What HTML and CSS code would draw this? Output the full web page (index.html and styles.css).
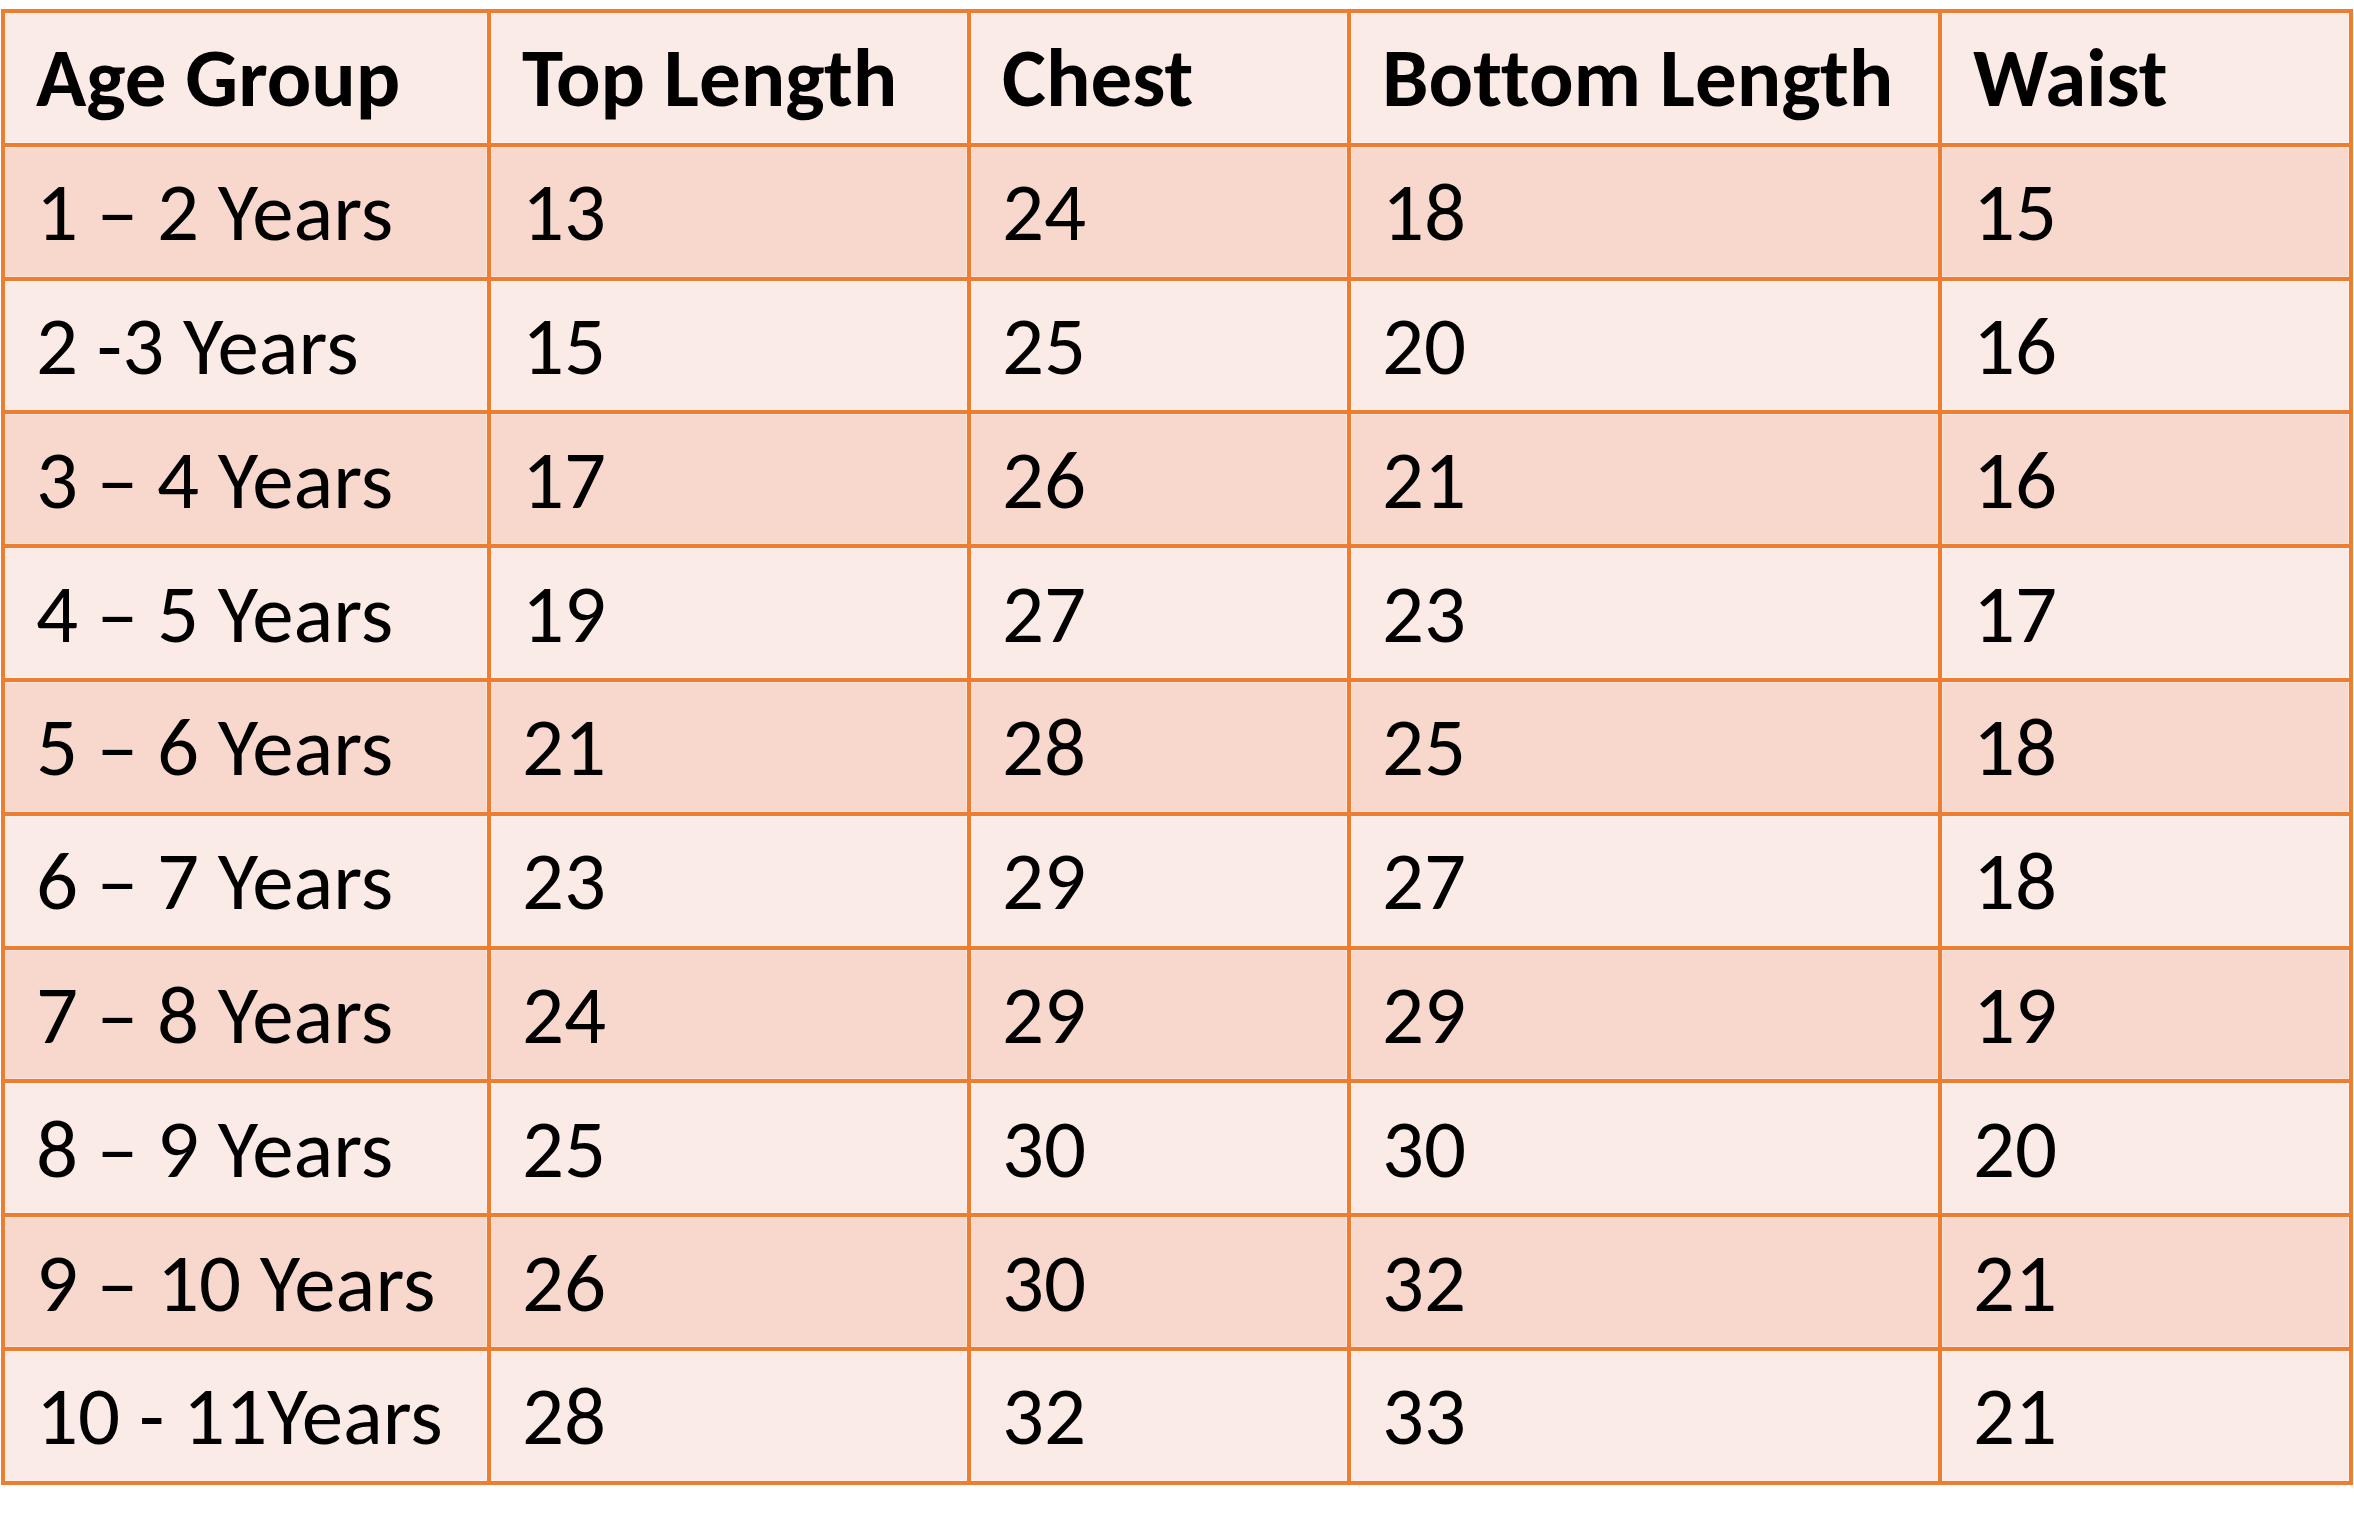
FILE: index.html
```html
<!DOCTYPE html>
<html lang="en">
<head>
<meta charset="utf-8">
<title>Size Chart</title>
<link rel="stylesheet" href="styles.css">
</head>
<body>
<table class="chart">
  <colgroup>
    <col class="c1"><col class="c2"><col class="c3"><col class="c4"><col class="c5">
  </colgroup>
  <thead>
    <tr class="head"><th>Age Group</th><th>Top Length</th><th>Chest</th><th>Bottom Length</th><th>Waist</th></tr>
  </thead>
  <tbody>
    <tr class="dark"><td>1 – 2 Years</td><td>13</td><td>24</td><td>18</td><td>15</td></tr>
    <tr class="light"><td>2 -3 Years</td><td>15</td><td>25</td><td>20</td><td>16</td></tr>
    <tr class="dark"><td>3 – 4 Years</td><td>17</td><td>26</td><td>21</td><td>16</td></tr>
    <tr class="light"><td>4 – 5 Years</td><td>19</td><td>27</td><td>23</td><td>17</td></tr>
    <tr class="dark"><td>5 – 6 Years</td><td>21</td><td>28</td><td>25</td><td>18</td></tr>
    <tr class="light"><td>6 – 7 Years</td><td>23</td><td>29</td><td>27</td><td>18</td></tr>
    <tr class="dark"><td>7 – 8 Years</td><td>24</td><td>29</td><td>29</td><td>19</td></tr>
    <tr class="light"><td>8 – 9 Years</td><td>25</td><td>30</td><td>30</td><td>20</td></tr>
    <tr class="dark"><td>9 – 10 Years</td><td>26</td><td>30</td><td>32</td><td>21</td></tr>
    <tr class="light"><td>10 - 11Years</td><td>28</td><td>32</td><td>33</td><td>21</td></tr>
  </tbody>
</table>
</body>
</html>
```

FILE: styles.css
```css
html, body {
  margin: 0;
  padding: 0;
  background: #ffffff;
}
body {
  padding: 9px 0 0 1px;
}
.chart {
  border-collapse: collapse;
  table-layout: fixed;
  width: 2348px;
  font-family: Carlito, Lato, "Open Sans", sans-serif;
  font-size: 83px;
  font-variant-ligatures: none;
  color: #000000;
}
.c1 { width: 486px; }
.c2 { width: 480px; }
.c3 { width: 380px; }
.c4 { width: 591px; }
.c5 { width: 411px; }
.chart th,
.chart td {
  border: 4px solid #ED7D31;
  padding: 0 0 0 31px;
  height: 129.8px;
  text-align: left;
  vertical-align: middle;
  white-space: nowrap;
  line-height: 1;
  box-shadow: inset 0 0 0 1px rgba(255, 255, 255, 0.35);
}
.chart th {
  font-weight: 700;
}
.chart td {
  font-weight: 400;
}
.head, .light {
  background: #FBEBE7;
}
.dark {
  background: #F8D8CD;
}
```
